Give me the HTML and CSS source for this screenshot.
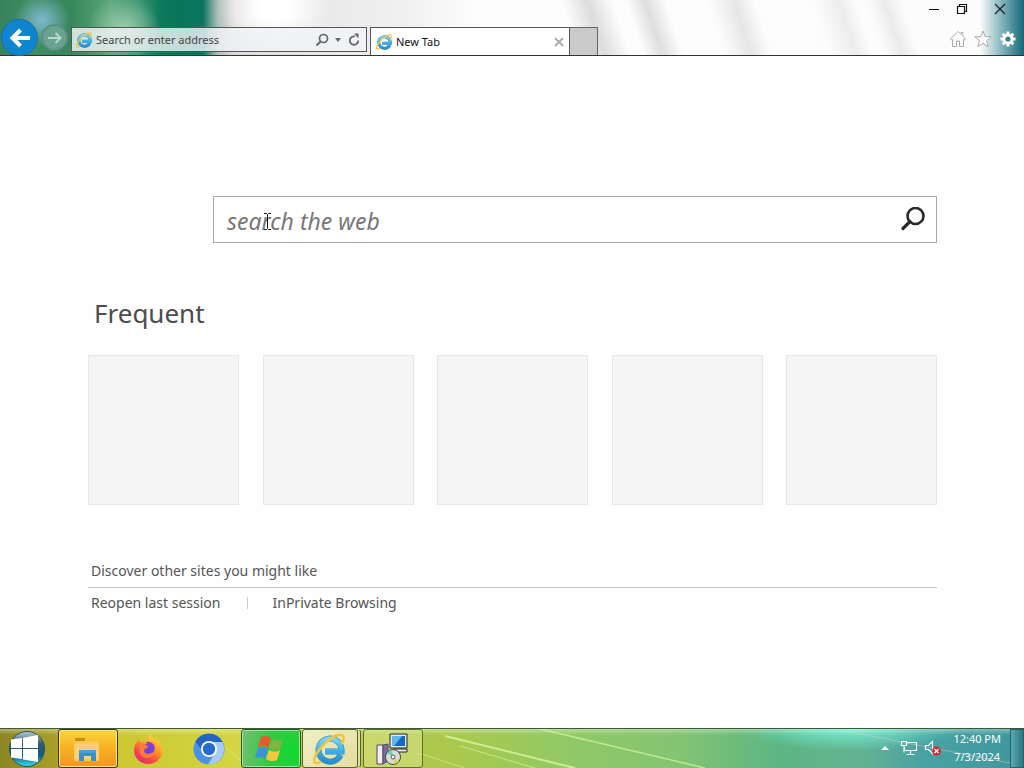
FILE: index.html
```html
<!DOCTYPE html>
<html lang="en">
<head>
  <meta charset="UTF-8" />
  <meta name="viewport" content="width=device-width, initial-scale=1" />
  <title>New Tab</title>
  <link rel="stylesheet" href="styles.css">
</head>
<body>

  <!-- shared logo -->
  <svg class="defs" width="0" height="0" aria-hidden="true">
    <defs>
      <linearGradient id="ieBlue" x1="0" y1="0" x2="0" y2="1">
        <stop offset="0" stop-color="#7fd4f5" />
        <stop offset="0.5" stop-color="#3fb2e8" />
        <stop offset="1" stop-color="#2a8fd0" />
      </linearGradient>
      <symbol id="ie" viewBox="0 0 32 32">
        <path d="M27.500 22A11.500 11.500 0 1 1 28.500 16V18.500H12" fill="none" stroke="#2b86bd" stroke-width="6" />
        <path d="M27.500 22A11.500 11.500 0 1 1 28.500 16V18.500H12" fill="none" stroke="url(#ieBlue)" stroke-width="4.800" />
        <path d="M7 29C-1 33 0 25 6 17S22 1 28 2c4 1 3 5 1 8" fill="none" stroke="#f2c53d" stroke-width="2.600" stroke-linecap="round" />
      </symbol>
    </defs>
  </svg>

  <header class="chrome">
    <nav class="travel">
      <button class="back" aria-label="Back">
        <svg width="24" height="24" viewBox="0 0 24 24"><path d="M22 12H5M12.500 4 4.500 12l8 8" fill="none" stroke="#fff" stroke-width="4" /></svg>
      </button>
      <button class="forward" aria-label="Forward">
        <svg width="16" height="16" viewBox="0 0 16 16"><path d="M1 8h12M8.500 3l5 5-5 5" fill="none" stroke="#b9d9cf" stroke-width="2" /></svg>
      </button>
    </nav>

    <form class="address">
      <svg width="16" height="16"><use href="#ie" /></svg>
      <input type="text" placeholder="Search or enter address" aria-label="Address">
      <button type="button" aria-label="Search">
        <svg width="14" height="14" viewBox="0 0 14 14"><circle cx="8.500" cy="5.500" r="4" fill="none" stroke="#666" stroke-width="1.700" /><path d="M5.500 8.500 1.500 12.500" stroke="#666" stroke-width="2" /></svg>
      </button>
      <button type="button" aria-label="Show address list">
        <svg width="6" height="4" viewBox="0 0 6 4"><path d="M0 0h6L3 4z" fill="#666" /></svg>
      </button>
      <button type="button" aria-label="Refresh">
        <svg width="14" height="14" viewBox="0 0 14 14"><path d="M11.200 7.500A4.200 4.200 0 1 1 8 3.500" fill="none" stroke="#666" stroke-width="1.800" /><path d="M7 .500l4.500 0v5z" fill="#666" /></svg>
      </button>
    </form>

    <div class="tabs">
      <div class="tab">
        <svg width="16" height="16"><use href="#ie" /></svg>
        <span>New Tab</span>
        <button aria-label="Close tab">
          <svg width="10" height="10" viewBox="0 0 10 10"><path d="M1 1l8 8M9 1 1 9" stroke="#aaa" stroke-width="1.800" /></svg>
        </button>
      </div>
      <button class="new-tab" aria-label="New tab"></button>
    </div>

    <div class="window">
      <div class="caption">
        <button aria-label="Minimize"><svg width="12" height="12" viewBox="0 0 12 12"><path d="M1 6.500h10" stroke="#111" /></svg></button>
        <button aria-label="Restore"><svg width="12" height="12" viewBox="0 0 12 12"><path d="M1.500 3.500h7v7h-7zM3.500 3.500v-2h7v7h-2" fill="none" stroke="#111" stroke-width="1.200" /></svg></button>
        <button aria-label="Close"><svg width="12" height="12" viewBox="0 0 12 12"><path d="M1 1l10 10M11 1 1 11" stroke="#122" stroke-width="1.200" /></svg></button>
      </div>
      <div class="tools">
        <button aria-label="Home"><svg width="18" height="18" viewBox="0 0 18 18"><path d="M1.500 9 9 1.500 12 4.500V2.500h2v4L16.500 9l-1 1-1-.700V16.500h-4V11h-3v5.500h-4V9.300l-1 .700z" fill="#fff" stroke="#aaa" /></svg></button>
        <button aria-label="Favorites"><svg width="18" height="18" viewBox="0 0 18 18"><path d="M9 1l2.200 5.600 6 .300-4.700 3.800 1.600 5.900L9 13.300l-5.100 3.300 1.600-5.900L.800 6.900l6-.300z" fill="#fff" stroke="#aaa" /></svg></button>
        <button aria-label="Tools"><svg width="18" height="18" viewBox="0 0 18 18"><g stroke="#fff" stroke-width="3"><path d="M9 1.500v15M1.500 9h15M3.700 3.700l10.600 10.600M14.300 3.700 3.700 14.300" /></g><circle cx="9" cy="9" r="5.500" fill="#fff" /><circle cx="9" cy="9" r="2.600" fill="#2f8494" /></svg></button>
      </div>
    </div>
  </header>

  <main class="page">
    <form class="search">
      <input type="text" placeholder="search the web" aria-label="Search the web">
      <button type="button" aria-label="Search">
        <svg width="26" height="26" viewBox="0 0 26 26"><circle cx="15.500" cy="9" r="8" fill="none" stroke="#2b2b2b" stroke-width="2.600" /><path d="M10 14.500 3 21.500" stroke="#2b2b2b" stroke-width="3.200" stroke-linecap="round" /></svg>
      </button>
      <svg class="ibeam" width="9" height="17" viewBox="0 0 9 17"><path d="M1 .500h2.500l1 1 1-1H8M4.500 1.500v14M1 16.500h2.500l1-1 1 1H8" fill="none" stroke="#111" /></svg>
    </form>

    <h1>Frequent</h1>
    <div class="tiles">
      <div class="tile"></div>
      <div class="tile"></div>
      <div class="tile"></div>
      <div class="tile"></div>
      <div class="tile"></div>
    </div>

    <div class="discover"><a href="#">Discover other sites you might like</a></div>
    <div class="links">
      <a href="#">Reopen last session</a>
      <a href="#">InPrivate Browsing</a>
    </div>
  </main>

  <footer class="taskbar">
    <svg class="streaks" viewBox="0 0 1024 39" preserveAspectRatio="none" aria-hidden="true">
      <g fill="none" stroke="#d8f8a0">
        <path d="M445 7 575 39" stroke-width="2" opacity=".8" />
        <path d="M460 17 535 39" opacity=".7" />
        <path d="M540 0 705 39" stroke-width="1.500" opacity=".7" />
        <path d="M418 24 465 39" opacity=".6" />
        <path d="M215 10 250 39" opacity=".6" />
        <path d="M850 3 1010 34" stroke="#d7c9c6" opacity=".5" />
      </g>
    </svg>

    <button class="start" aria-label="Start">
      <svg width="38" height="38" viewBox="0 0 38 38">
        <defs><linearGradient id="orb" x1="0" y1="0" x2="0" y2="1"><stop offset="0" stop-color="#b9ccd3" /><stop offset=".35" stop-color="#335970" /><stop offset=".7" stop-color="#126083" /><stop offset="1" stop-color="#3be0f4" /></linearGradient></defs>
        <circle cx="19" cy="19" r="17.500" fill="url(#orb)" stroke="#2b4e5c" />
        <path d="M3 9.500 14 8v10H3zM15 7.800 30 5v13H15zM3 19h11v10L3 27.500zM15 19h15v13l-15-2.500z" fill="#fff" />
      </svg>
    </button>
    <button class="task explorer" aria-label="File Explorer">
      <svg width="30" height="30" viewBox="0 0 30 30">
        <path d="M2 4h11l2 3h12v20H2z" fill="#ffc751" /><path d="M3 4h10v3H3z" fill="#c98c13" /><path d="M2 10h25v15H2z" fill="#ffd070" />
        <path d="M7 16h17v11h-5v-5h-7v5H7z" fill="#3d8fc8" /><path d="M7 16h17v3H7z" fill="#4aa0d6" />
      </svg>
    </button>
    <button class="task" aria-label="Firefox">
      <svg width="32" height="32" viewBox="0 0 32 32">
        <defs><linearGradient id="fox" x1=".8" y1="0" x2=".2" y2="1"><stop offset="0" stop-color="#ffe14a" /><stop offset=".4" stop-color="#ff9a2b" /><stop offset=".75" stop-color="#f8404a" /><stop offset="1" stop-color="#e2238a" /></linearGradient></defs>
        <path d="M19 1c1 4 4 5 6 7l1-1c4 5 5 10 4 14-2 6-7 10-14 10S2 25 2 18c0-4 1-7 3-9l1-3 3 3c3-1 5 0 5 0 1-4 3-6 5-8z" fill="url(#fox)" />
        <circle cx="16.500" cy="16.500" r="6" fill="#7544d2" /><path d="M8 12c3-2 6 0 8 1 0 3-4 2-4 5 1 4 7 4 10 0 0 4-3 7-7 7-6 0-9-6-7-13z" fill="#fb7a35" />
        <path d="M14 9c5-1 9 2 9 7-2-2-3-3-5-3s-3-3-4-4z" fill="#8b40c8" />
      </svg>
    </button>
    <button class="task" aria-label="Chromium">
      <svg width="32" height="32" viewBox="0 0 32 32">
        <circle cx="16" cy="16" r="15.500" fill="#4a8fe8" /><path d="M2.500 8.500A15.500 15.500 0 0 1 29.500 9H16L9 17z" fill="#2462c6" />
        <path d="M29.500 9A15.500 15.500 0 0 1 15 31.500L22.500 19 20 9z" fill="#a8ccfa" />
        <circle cx="16" cy="16" r="8" fill="#fff" /><circle cx="16" cy="16" r="6.200" fill="#286bd0" />
      </svg>
    </button>
    <button class="task green" aria-label="Windows">
      <svg width="30" height="30" viewBox="0 0 30 30">
        <path d="M6 3c4-2 7-1 10 1l-3 10c-3-2-6-2-10-1z" fill="#e45d28" /><path d="M17 5c4 2 7 2 11 0l-3 10c-4 2-8 1-11-1z" fill="#7fb541" />
        <path d="M3 14c4-1 7-1 10 1l-3 10c-3-2-6-2-10-1z" fill="#3f8fdb" /><path d="M14 16c4 2 7 2 11 0l-3 10c-4 2-8 1-11-1z" fill="#f8c63c" />
      </svg>
    </button>
    <button class="task active stack" aria-label="Internet Explorer">
      <svg width="32" height="32"><use href="#ie" /></svg>
    </button>
    <button class="task open" aria-label="Setup">
      <svg width="32" height="32" viewBox="0 0 32 32">
        <path d="M1 12h6v19H1z" fill="#f0ebf5" stroke="#554866" /><path d="M7 12l5-1v17l-5 3z" fill="#7d6d95" stroke="#554866" />
        <path d="M14 1h17v14H14z" fill="#dfe6ec" stroke="#223" /><path d="M16 3h13v10H16z" fill="#1767c4" /><path d="M16 3h10l-8 10h-2z" fill="#5fb6f2" />
        <path d="M18 16h13v3H18z" fill="#eee" stroke="#223" />
        <circle cx="17" cy="24" r="7.500" fill="#d7ded8" stroke="#444" /><path d="M17 24l-6-4a7 7 0 0 1 5-3z" fill="#77c9bb" /><path d="M17 24l6 4a7 7 0 0 1-5 3z" fill="#d9d26a" /><circle cx="17" cy="24" r="2" fill="#fff" stroke="#555" />
      </svg>
    </button>

    <div class="tray">
      <button aria-label="Show hidden icons"><svg width="8" height="4" viewBox="0 0 8 4"><path d="M0 4 4 0l4 4z" fill="#fff" /></svg></button>
      <button aria-label="Network"><svg width="18" height="16" viewBox="0 0 18 16"><path d="M6.500 2.500h10v8H4.500V7M10.500 11v3M6.500 14.500h8M1.500 1.500h5v4h-5zM4 5.500v7" fill="none" stroke="#fff" stroke-width="1.200" /></svg></button>
      <button aria-label="Volume muted"><svg width="18" height="16" viewBox="0 0 18 16"><path d="M1.500 5.500h3l4-4v12l-4-4h-3z" fill="none" stroke="#fff" stroke-width="1.200" /><circle cx="12.500" cy="11" r="4.500" fill="#d8253a" /><path d="M10.500 9l4 4M14.500 9l-4 4" stroke="#fff" stroke-width="1.300" /></svg></button>
      <div class="clock"><span>12:40 PM</span><span>7/3/2024</span></div>
      <button class="desktop" aria-label="Show desktop"></button>
    </div>
  </footer>

</body>
</html>
```

FILE: styles.css
```css
* {
  box-sizing: border-box;
}
body {
  margin: 0;
  min-height: 100vh;
  display: flex;
  flex-direction: column;
  background: #fefefe;
  color: #555;
  font-family: "Noto Sans", "Open Sans", sans-serif;
  font-size: 14px;
}
button {
  display: flex;
  align-items: center;
  justify-content: center;
  padding: 0;
  border: none;
  background: none;
}
input {
  min-width: 0;
  flex: 1;
  padding: 0;
  border: none;
  outline: none;
  background: none;
  font-family: inherit;
}
a {
  color: inherit;
  text-decoration: none;
}
svg {
  display: block;
  flex: none;
}
.defs {
  position: absolute;
}

/* browser frame */
.chrome {
  display: flex;
  align-items: flex-end;
  height: 56px;
  border-bottom: 1px solid #333;
  background:
    radial-gradient(ellipse 28px 26px at 42px 20px, #7fb9d0, rgba(127, 185, 208, 0)),
    radial-gradient(ellipse 36px 32px at 124px 28px, #9ccbab, rgba(156, 203, 171, 0)),
    radial-gradient(ellipse 56px 44px at 275px 8px, #fff 30%, rgba(255, 255, 255, 0)),
    linear-gradient(72deg, transparent 550px, #dcdcdc 575px, transparent 600px, transparent 612px, #dedede 630px, transparent 650px, transparent 690px, #e6e6e6 715px, transparent 735px, transparent 790px, #ececec 815px, transparent 830px, transparent 840px, #ebebeb 858px, transparent 875px),
    linear-gradient(to right, #37835b 0, #3f8c62 35px, #37865c 70px, #5ba67b 110px, #3a9470 140px, #0b7c5c 160px, #087558 180px, #0c7560 203px, #b0bfbc 218px, #dedcdb 235px, #e9e9e9 320px, #f0f0f0 400px, #fdfdfd 480px, #fcfcfc calc(100% - 44px), #8ebac2 calc(100% - 24px), #126777 100%);
}
.travel {
  display: flex;
  align-items: center;
  gap: 3px;
  height: 35px;
  padding-left: 1px;
  margin-right: 3px;
}
.back {
  width: 37px;
  height: 37px;
  border: 1px solid #1c6db0;
  border-radius: 50%;
  background: #0f84cf;
}
.forward {
  width: 27px;
  height: 27px;
  border: 2px solid #5b8f85;
  border-radius: 50%;
  background: #69a291;
}
.address {
  display: flex;
  align-items: center;
  gap: 4px;
  width: 296px;
  height: 25px;
  margin: 0 3px 3px 0;
  padding: 0 5px 0 4px;
  border: 1px solid #555;
  background: rgba(240, 243, 247, 0.82);
}
.address input {
  color: #333;
  font-size: 11px;
}
.address input::placeholder {
  color: #444;
  opacity: 1;
}
.address button {
  min-width: 10px;
  height: 16px;
}
.tabs {
  display: flex;
  height: 28px;
}
.tab {
  display: flex;
  align-items: center;
  gap: 4px;
  width: 200px;
  padding: 0 5px;
  border: 1px solid #555;
  border-bottom: none;
  background: #fff;
  color: #111;
  font-size: 11px;
}
.tab span {
  flex: 1;
}
.new-tab {
  width: 28px;
  border: 1px solid #666;
  border-width: 1px 1px 0 0;
  background: #cacaca;
}
.window {
  display: flex;
  flex-direction: column;
  align-self: stretch;
  margin-left: auto;
}
.caption {
  display: flex;
  justify-content: flex-end;
  gap: 16px;
  height: 18px;
  padding-right: 18px;
}
.caption button:last-child {
  margin-left: 10px;
}
.tools {
  display: flex;
  justify-content: flex-end;
  gap: 7px;
  padding: 12px 7px 0 0;
}

/* new tab page */
.page {
  flex: 1;
  padding: 140px 87px 0 88px;
}
.search {
  position: relative;
  display: flex;
  align-items: center;
  height: 47px;
  margin-left: 125px;
  padding: 0 10px 0 13px;
  border: 1px solid #aaa;
  background: #fff;
}
.search input {
  height: 45px;
  padding-top: 2px;
  font-size: 23px;
  font-style: italic;
}
.search input::placeholder {
  color: #777;
  opacity: 1;
}
.ibeam {
  position: absolute;
  left: 49px;
  top: 16px;
}
h1 {
  margin: 52px 0 24px;
  padding-left: 6px;
  color: #4c4c4c;
  font-size: 26px;
  font-weight: normal;
  line-height: 36px;
}
.tiles {
  display: flex;
  justify-content: space-between;
}
.tile {
  width: 151px;
  height: 150px;
  border: 1px solid #e7e7e7;
  background: #f5f5f5;
}
.discover {
  margin-top: 54px;
  padding: 0 3px 4px;
  border-bottom: 1px solid #c8c8c8;
  line-height: 24px;
}
.links {
  display: flex;
  padding: 3px;
  line-height: 24px;
}
.links a + a {
  margin-left: 26px;
  padding-left: 26px;
  background: linear-gradient(#ccc, #ccc) 0 6px / 1px 12px no-repeat;
}

/* taskbar */
.taskbar {
  position: relative;
  display: flex;
  height: 40px;
  border-top: 1px solid #3c5a33;
  background:
    linear-gradient(rgba(255, 255, 255, 0.35), transparent 6px),
    radial-gradient(ellipse 110px 22px at 83% 0, #72eed2, rgba(114, 238, 210, 0)),
    linear-gradient(to right, #8b8622 0, #a79f28 55px, #cbc832 120px, #d4d642 240px, #b5c84c 380px, #a9c94d 460px, #92c964 560px, #83c473 680px, #5cb583 780px, #63b391 860px, #4aa3a2 920px, #3c969d 100%);
}
.streaks {
  position: absolute;
  left: 0;
  top: 0;
  width: 100%;
  height: 100%;
}
.taskbar button,
.tray {
  position: relative;
}
.start {
  width: 54px;
  margin-right: 4px;
}
.task {
  width: 60px;
  height: 39px;
  padding-right: 2px;
  margin-right: 1px;
  border: 1px solid transparent;
  border-radius: 3px;
}
.explorer {
  border-color: #40320d;
  background: linear-gradient(#f7d83c, #f6b022 50%, #f59520);
  box-shadow: inset 0 0 0 1px #ffe680;
}
.green {
  border-color: #235c25;
  background: radial-gradient(circle at 90% 60%, #10d830, #35c945 50%, #79bd77);
  box-shadow: inset 0 0 0 1px #9fe49d;
}
.active {
  width: 56px;
  border-color: #59602e;
  background: linear-gradient(135deg, #edf0c8, #e5dd9c);
}
.stack {
  margin-right: 5px;
  box-shadow: 3px 0 0 -1px #dbe0a8, 4px 0 0 -1px #59602e;
}
.open {
  border-color: #59702e;
  background: rgba(225, 232, 150, 0.45);
}
.tray {
  display: flex;
  align-items: center;
  gap: 6px;
  height: 37px;
  margin-left: auto;
  color: #fff;
}
.tray button:first-child {
  margin-right: 5px;
}
.clock {
  display: flex;
  flex-direction: column;
  align-items: center;
  margin: 0 3px 0 5px;
  font-size: 11px;
  line-height: 18px;
}
.tray .desktop {
  align-self: flex-start;
  width: 14px;
  height: 39px;
  border: 1px solid #24636c;
  background: linear-gradient(to right, #5ca9ae, #2b7883);
}
```
